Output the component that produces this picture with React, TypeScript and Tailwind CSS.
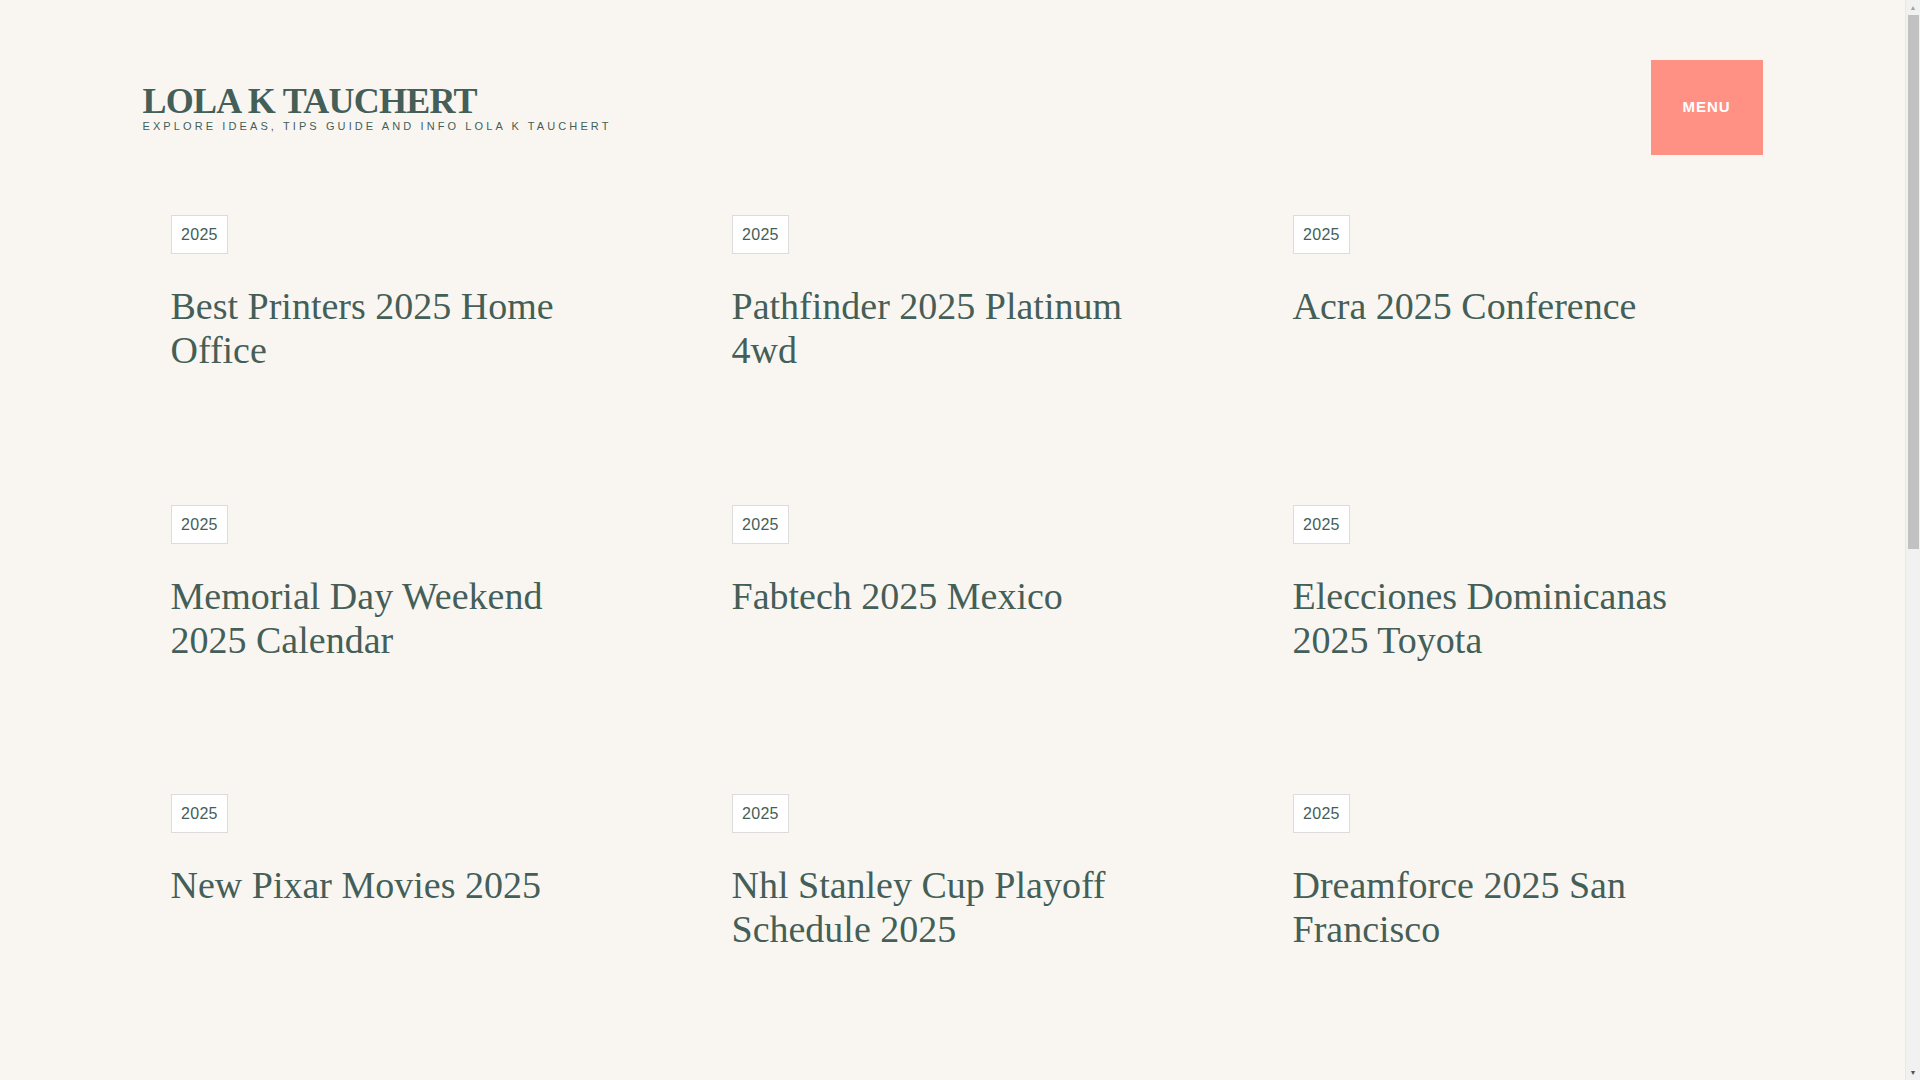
import React from "react";

const POSTS = [
  { id: 1, tag: "2025", title: "Best Printers 2025 Home Office" },
  { id: 2, tag: "2025", title: "Pathfinder 2025 Platinum 4wd" },
  { id: 3, tag: "2025", title: "Acra 2025 Conference" },
  { id: 4, tag: "2025", title: "Memorial Day Weekend 2025 Calendar" },
  { id: 5, tag: "2025", title: "Fabtech 2025 Mexico" },
  { id: 6, tag: "2025", title: "Elecciones Dominicanas 2025 Toyota" },
  { id: 7, tag: "2025", title: "New Pixar Movies 2025" },
  { id: 8, tag: "2025", title: "Nhl Stanley Cup Playoff Schedule 2025" },
  { id: 9, tag: "2025", title: "Dreamforce 2025 San Francisco" },
  { id: 10, tag: "2025", title: "Easter Sunday 2025 Date" },
  { id: 11, tag: "2025", title: "Chinese New Year 2025 Animal" },
  { id: 12, tag: "2025", title: "Mardi Gras 2025 Parade Schedule" },
  { id: 13, tag: "2025", title: "Super Bowl 2025 Halftime Show" },
  { id: 14, tag: "2025", title: "Toyota Camry 2025 Hybrid" },
  { id: 15, tag: "2025", title: "Spring Break 2025 Dates" },
];

export default function App() {
  return (
    <div className="flex min-h-screen bg-[#f9f6f2] text-[#445e58]">
      <div className="flex-1">
        <div className="mx-auto w-[1620px]">
          {/* Site header */}
          <header className="flex items-center justify-between pt-[60px]">
            <div>
              <h1 className="font-['Liberation_Serif',serif] text-[36px] font-bold leading-[36px] tracking-[-0.75px]">
                LOLA K TAUCHERT
              </h1>
              <p className="font-['Liberation_Sans',Arial,sans-serif] text-[11px] leading-[14px] tracking-[3.1px] uppercase">
                Explore ideas, tips guide and info Lola K Tauchert
              </p>
            </div>
            <button className="w-[112px] h-[95px] bg-[#ff9184] text-white font-['Liberation_Sans',Arial,sans-serif] font-bold text-[15px] tracking-[1px]">
              MENU
            </button>
          </header>

          {/* Post grid */}
          <main className="pl-[28px] pt-[60px]">
            <div className="grid grid-cols-[repeat(3,440px)] gap-x-[121px] gap-y-[132.5px]">
              {POSTS.map((post) => (
                <article key={post.id} className="flex flex-col items-start">
                  <span className="bg-white border border-[#dcdcdc] px-[9.5px] py-[9px] font-['Liberation_Sans',Arial,sans-serif] text-[16px] leading-[19px] tracking-[0.3px]">
                    {post.tag}
                  </span>
                  <h2 className="mt-[30px] font-['Liberation_Serif',serif] text-[38px] leading-[44px]">
                    {post.title}
                  </h2>
                </article>
              ))}
            </div>
          </main>

          {/* Footer */}
          <footer className="pt-[150px] pb-[120px] font-['Liberation_Sans',Arial,sans-serif] text-[13px] tracking-[1px] text-[#6b7f7a] uppercase">
            © 2025 Lola K Tauchert
          </footer>
        </div>
      </div>

      {/* Window scrollbar */}
      <aside className="sticky top-0 h-screen w-[15px] shrink-0 flex flex-col items-center bg-[#f1f1f1] border-l border-[#e8e8e8]">
        <span className="h-[15px] leading-[15px] text-[7px] text-[#a3a3a3]">▲</span>
        <div className="w-[11px] h-[534px] bg-[#c1c1c1]" />
        <span className="mt-auto h-[15px] leading-[15px] text-[7px] text-[#505050]">▼</span>
      </aside>
    </div>
  );
}
